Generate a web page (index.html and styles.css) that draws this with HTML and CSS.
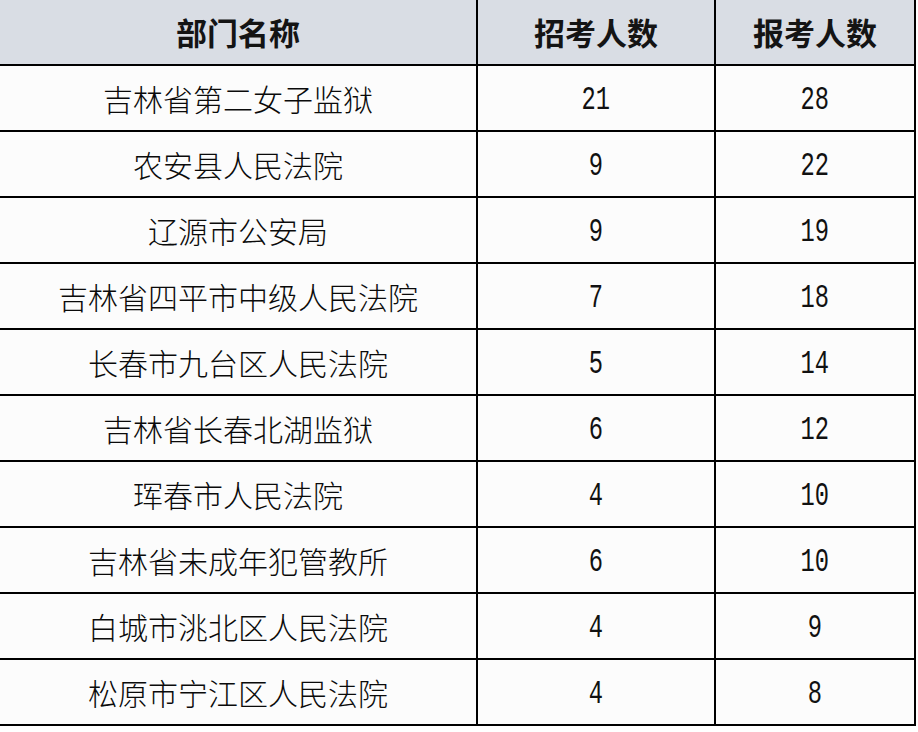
FILE: index.html
```html
<!DOCTYPE html>
<html lang="zh-CN">
<head>
<meta charset="utf-8">
<title>招考人数</title>
<link rel="stylesheet" href="styles.css">
</head>
<body>
<div class="table" role="table">
  <div class="cell head">部门名称</div>
  <div class="cell head">招考人数</div>
  <div class="cell head">报考人数</div>

  <div class="cell name">吉林省第二女子监狱</div>
  <div class="cell num"><span>21</span></div>
  <div class="cell num"><span>28</span></div>

  <div class="cell name">农安县人民法院</div>
  <div class="cell num"><span>9</span></div>
  <div class="cell num"><span>22</span></div>

  <div class="cell name">辽源市公安局</div>
  <div class="cell num"><span>9</span></div>
  <div class="cell num"><span>19</span></div>

  <div class="cell name">吉林省四平市中级人民法院</div>
  <div class="cell num"><span>7</span></div>
  <div class="cell num"><span>18</span></div>

  <div class="cell name">长春市九台区人民法院</div>
  <div class="cell num"><span>5</span></div>
  <div class="cell num"><span>14</span></div>

  <div class="cell name">吉林省长春北湖监狱</div>
  <div class="cell num"><span>6</span></div>
  <div class="cell num"><span>12</span></div>

  <div class="cell name">珲春市人民法院</div>
  <div class="cell num"><span>4</span></div>
  <div class="cell num"><span>10</span></div>

  <div class="cell name">吉林省未成年犯管教所</div>
  <div class="cell num"><span>6</span></div>
  <div class="cell num"><span>10</span></div>

  <div class="cell name">白城市洮北区人民法院</div>
  <div class="cell num"><span>4</span></div>
  <div class="cell num"><span>9</span></div>

  <div class="cell name">松原市宁江区人民法院</div>
  <div class="cell num"><span>4</span></div>
  <div class="cell num"><span>8</span></div>
</div>
</body>
</html>
```
FILE: styles.css
```css
html, body {
  margin: 0;
  padding: 0;
  background: #ffffff;
}

body {
  width: 918px;
  height: 732px;
  overflow: hidden;
  font-family: "Noto Sans CJK SC", "Noto Sans", sans-serif;
  color: #111111;
}

.table {
  display: grid;
  grid-template-columns: 476px 236px 198px;
  grid-template-rows: repeat(11, 64px);
  gap: 2px;
  padding: 0 2px 2px 0;
  width: max-content;
  background: #000000;
}

.cell {
  display: flex;
  align-items: center;
  justify-content: center;
  background: #fcfcfc;
  font-size: 30px;
  line-height: 1;
}

.head {
  background: #d9dde4;
  font-weight: 700;
  font-size: 31px;
  color: #141414;
  padding-bottom: 2px;
}

.name {
  font-weight: 300;
  color: #0a0a0a;
}

.num span {
  display: inline-block;
  font-family: "Liberation Mono", "DejaVu Sans Mono", monospace;
  font-size: 33px;
  transform: scaleX(0.72);
  padding-top: 4px;
}
```
